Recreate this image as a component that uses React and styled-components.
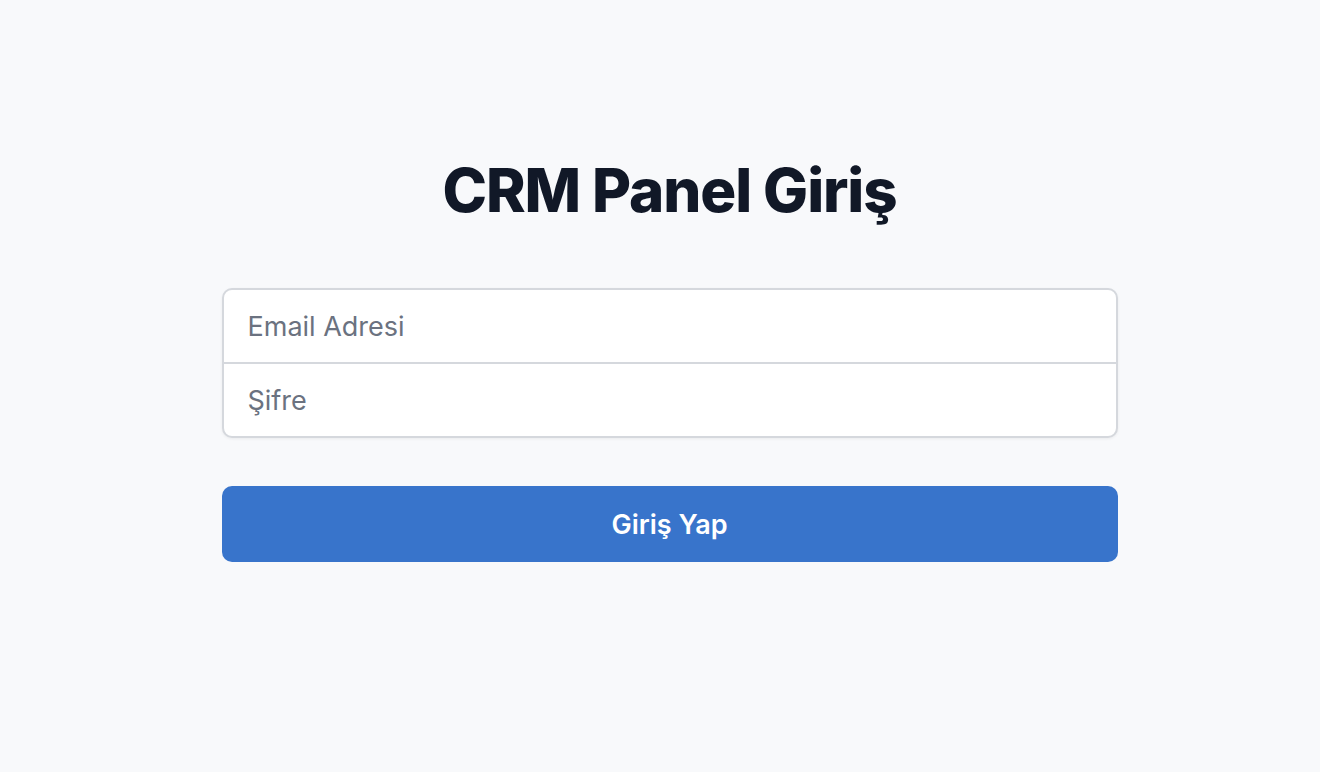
import React from "react";
import styled, { createGlobalStyle } from "styled-components";

const Global = createGlobalStyle`
  html, body { margin: 0; padding: 0; background: #f8f9fb; }
  body { font-family: Inter, "Noto Sans", sans-serif; }
  * { box-sizing: border-box; }
`;

const Page = styled.main`
  min-height: 772px;
  display: flex;
  justify-content: center;
  padding: 0 0 0 19px;
`;

const Wrap = styled.div`
  width: 896px;
  padding-top: 152px;
  display: flex;
  flex-direction: column;
  align-items: stretch;
`;

const Title = styled.h1`
  margin: 0;
  text-align: center;
  font-size: 60px;
  line-height: 76px;
  font-weight: 800;
  color: #111827;
  letter-spacing: -1.1px;
`;

const Fields = styled.div`
  margin-top: 60px;
  background: #fff;
  border: 2px solid #d5d8dd;
  border-radius: 10px;
  box-shadow: 0 1px 3px rgba(0, 0, 0, 0.06);
  overflow: hidden;
`;

const Input = styled.input`
  display: block;
  width: 100%;
  height: ${(p) => p.$h}px;
  border: none;
  border-top: ${(p) => (p.$first ? "none" : "2px solid #d5d8dd")};
  padding: 0 24px;
  font-family: inherit;
  font-size: 27px;
  color: #111827;
  background: transparent;
  outline: none;
  &::placeholder { color: #6b7280; }
`;

const Button = styled.button`
  margin-top: 48px;
  height: 76px;
  border: none;
  border-radius: 10px;
  background: #3874cb;
  color: #fff;
  font-family: inherit;
  font-size: 27px;
  font-weight: 600;
  cursor: pointer;
`;

export default function App() {
  return (
    <>
      <Global />
      <Page>
        <Wrap>
          <Title>CRM Panel Giriş</Title>
          <Fields>
            <Input $first $h={72} type="email" placeholder="Email Adresi" />
            <Input $h={74} type="password" placeholder="Şifre" />
          </Fields>
          <Button>Giriş Yap</Button>
        </Wrap>
      </Page>
    </>
  );
}
